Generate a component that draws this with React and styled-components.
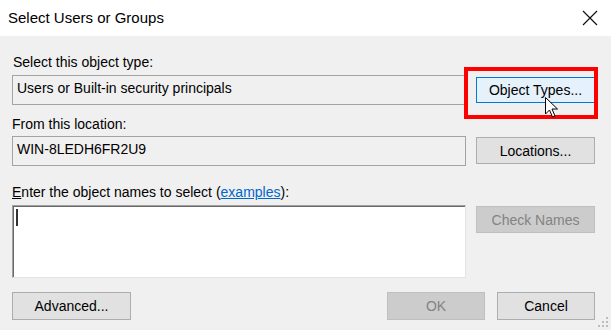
import React from 'react'
import styled, { createGlobalStyle } from 'styled-components'

const GlobalStyle = createGlobalStyle`
    html, body {
        margin: 0;
        padding: 0;
        background: #f0f0f0;
    }
    body {
        font-family: "Liberation Sans", Arial, sans-serif;
        font-size: 14px;
        color: #000;
    }
`

const Window = styled.div`
    position: relative;
    width: 611px;
    height: 330px;
    background: #f0f0f0;
    overflow: hidden;
`

const TitleBar = styled.div`
    height: 36px;
    background: #fff;
    display: flex;
    align-items: center;
    justify-content: space-between;
    padding: 0 13px 0 8px;
    box-sizing: border-box;
`

const Title = styled.div`
    font-size: 15px;
    color: #000;
    padding-bottom: 1px;
`

const CloseButton = styled.div`
    width: 16px;
    height: 16px;
    display: flex;
`

const Body = styled.div`
    display: grid;
    grid-template-columns: 454px 119px;
    column-gap: 10px;
    padding: 16px 16px 0 12px;
`

const FieldLabel = styled.div`
    grid-column: 1 / -1;
    height: 18px;
    line-height: 18px;
    margin-top: ${(p) => p.$top}px;
    padding-left: ${(p) => p.$indent || 0}px;
`

const AccessKey = styled.span`
    text-decoration: underline;
`

const Link = styled.span`
    color: #0066cc;
    text-decoration: underline;
`

const ReadBox = styled.div`
    height: 30px;
    box-sizing: border-box;
    margin-top: ${(p) => p.$top}px;
    border: 1px solid #a3a3a3;
    background: #f0f0f0;
    padding: 3px 0 0 4px;
    line-height: 18px;
    white-space: nowrap;
`

const NamesBox = styled.div`
    height: 73px;
    box-sizing: border-box;
    margin-top: ${(p) => p.$top}px;
    background: #fff;
    border-top: 1px solid #a0a0a0;
    border-left: 1px solid #a0a0a0;
    border-right: 1px solid #e3e3e3;
    border-bottom: 1px solid #e3e3e3;
    box-shadow: inset 1px 1px 0 #696969;
    padding: 3px 0 0 3px;
`

const Caret = styled.div`
    width: 2px;
    height: 17px;
    background: #333;
`

const Side = styled.div`
    margin-top: ${(p) => p.$top}px;
    position: relative;
    align-self: start;
`

const Button = styled.div`
    box-sizing: border-box;
    width: ${(p) => p.$width || 119}px;
    height: ${(p) => p.$height || 27}px;
    display: flex;
    align-items: center;
    justify-content: center;
    border: 1px solid ${(p) => (p.$hot ? '#0078d7' : p.$disabled ? '#bfbfbf' : '#adadad')};
    background: ${(p) => (p.$hot ? '#e5f1fb' : p.$disabled ? '#cccccc' : '#e1e1e1')};
    color: ${(p) => (p.$disabled ? '#838383' : '#000')};
    white-space: nowrap;
`

const Highlight = styled.div`
    position: absolute;
    left: -12px;
    top: -10px;
    width: 134px;
    height: 52px;
    box-sizing: border-box;
    border: 4px solid #ff0000;
    pointer-events: none;
`

const Pointer = styled.svg`
    position: absolute;
    left: 69px;
    top: 20px;
`

const Footer = styled.div`
    grid-column: 1 / -1;
    margin-top: 14px;
    display: flex;
    justify-content: space-between;
`

const ButtonGroup = styled.div`
    display: flex;
    gap: 12px;
`

const Grip = styled.svg`
    position: absolute;
    right: 2px;
    bottom: 2px;
`

const App = () => {
    return (
        <>
            <GlobalStyle />
            <Window>
                <TitleBar>
                    <Title>Select Users or Groups</Title>
                    <CloseButton>
                        <svg width="16" height="16" viewBox="0 0 16 16">
                            <path d="M1 1 L15 15 M15 1 L1 15" stroke="#111" strokeWidth="1.2" fill="none" />
                        </svg>
                    </CloseButton>
                </TitleBar>

                <Body>
                    <FieldLabel $top={1} $indent={1}>Select this object type:</FieldLabel>
                    <ReadBox $top={4}>Users or Built-in security principals</ReadBox>
                    <Side $top={6}>
                        <Button $hot $height={26}>Object Types...</Button>
                        <Highlight />
                        <Pointer width="14" height="22" viewBox="0 0 14 22">
                            <path
                                d="M0.5 0.5 L0.5 17 L4.5 13 L7.5 20 L10 19 L7 12 L12.5 12 Z"
                                fill="#fff"
                                stroke="#000"
                                strokeWidth="1"
                                strokeLinejoin="miter"
                            />
                        </Pointer>
                    </Side>

                    <FieldLabel $top={10}>From this location:</FieldLabel>
                    <ReadBox $top={3}>WIN-8LEDH6FR2U9</ReadBox>
                    <Side $top={4}>
                        <Button>Locations...</Button>
                    </Side>

                    <FieldLabel $top={17}>
                        <AccessKey>E</AccessKey>nter the object names to select (<Link>examples</Link>):
                    </FieldLabel>
                    <NamesBox $top={4}>
                        <Caret />
                    </NamesBox>
                    <Side $top={5}>
                        <Button $disabled>Check Names</Button>
                    </Side>

                    <Footer>
                        <Button $height={28}>Advanced...</Button>
                        <ButtonGroup>
                            <Button $disabled $width={98} $height={28}>OK</Button>
                            <Button $width={98} $height={28}>Cancel</Button>
                        </ButtonGroup>
                    </Footer>
                </Body>

                <Grip width="12" height="12" viewBox="0 0 12 12">
                    <rect x="9" y="1" width="2" height="2" fill="#bcbcbc" />
                    <rect x="5" y="5" width="2" height="2" fill="#bcbcbc" />
                    <rect x="9" y="5" width="2" height="2" fill="#bcbcbc" />
                    <rect x="1" y="9" width="2" height="2" fill="#bcbcbc" />
                    <rect x="5" y="9" width="2" height="2" fill="#bcbcbc" />
                    <rect x="9" y="9" width="2" height="2" fill="#bcbcbc" />
                </Grip>
            </Window>
        </>
    )
}

export default App
